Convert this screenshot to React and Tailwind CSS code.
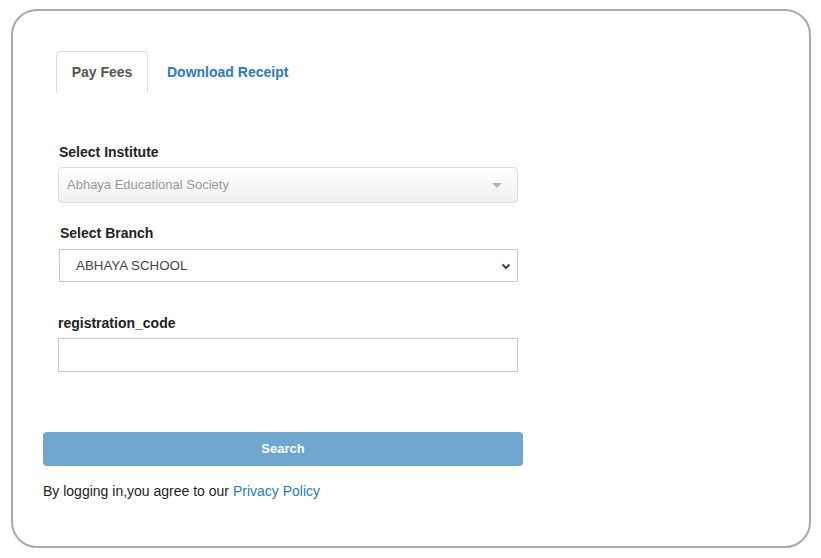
import React, { useState } from "react";

export default function App() {
  const [tab, setTab] = useState("pay");
  const [code, setCode] = useState("");

  return (
    <div className="w-[821px] h-[558px] bg-white pt-[9px] pl-[11px] font-['Liberation_Sans',Arial,sans-serif] text-[14px] text-[#333]">
      <div className="w-[800px] h-[539px] border-2 border-[#aaaaaa] rounded-[26px] pt-[40px] pl-[30px]">
        {/* tabs */}
        <div className="flex ml-[13px] h-[42px]">
          <button
            onClick={() => setTab("pay")}
            className="w-[92px] h-[42px] border border-b-0 border-[#dddddd] rounded-t-[4px] font-bold text-[#555] bg-white"
          >
            Pay Fees
          </button>
          <button
            onClick={() => setTab("receipt")}
            className="ml-[10px] px-[9px] h-[42px] font-bold text-[#2b7bb9]"
          >
            Download Receipt
          </button>
        </div>

        {/* form */}
        <div className="mt-[51px] w-[480px] flex flex-col">
          <div className="pl-[15px]">
            <label className="block font-bold text-[#222] leading-[16px] ml-[1px]">Select Institute</label>
            <div className="mt-[7px] w-[460px] h-[36px] border border-[#dcdcdc] rounded-[4px] bg-gradient-to-b from-white to-[#f0f0f0] flex items-center justify-between pl-[8px] pr-[15px]">
              <span className="text-[#999] text-[13px]">Abhaya Educational Society</span>
              <span className="w-0 h-0 border-l-[5px] border-r-[5px] border-t-[5px] border-l-transparent border-r-transparent border-t-[#b5b5b5]" />
            </div>

            <label className="block font-bold text-[#222] leading-[16px] mt-[22px] ml-[2px]">Select Branch</label>
            <div className="mt-[8px] ml-[1px] w-[459px] h-[33px] border border-[#cccccc] flex items-center justify-between pl-[16px] pr-[4px]">
              <span className="text-[#444] text-[13.333px]">ABHAYA SCHOOL</span>
              <svg width="12" height="12" viewBox="0 0 12 12" className="mr-[1px]">
                <path d="M2.5 4.5 L6 8 L9.5 4.5" fill="none" stroke="#444" strokeWidth="2" />
              </svg>
            </div>

            <label className="block font-bold text-[#222] leading-[16px] mt-[33px]">registration_code</label>
            <input
              value={code}
              onChange={(e) => setCode(e.target.value)}
              className="mt-[7px] w-[460px] h-[34px] border border-[#cccccc] outline-none px-[8px]"
            />
          </div>

          <button
            disabled
            className="mt-[60px] w-[480px] h-[34px] rounded-[4px] bg-[#6fa7cf] text-white text-[13px] font-bold"
          >
            Search
          </button>

          <p className="mt-[17px] leading-[16px] text-[#222]">
            By logging in,you agree to our <a className="text-[#2b7bb9]">Privacy Policy</a>
          </p>
        </div>
      </div>
    </div>
  );
}
